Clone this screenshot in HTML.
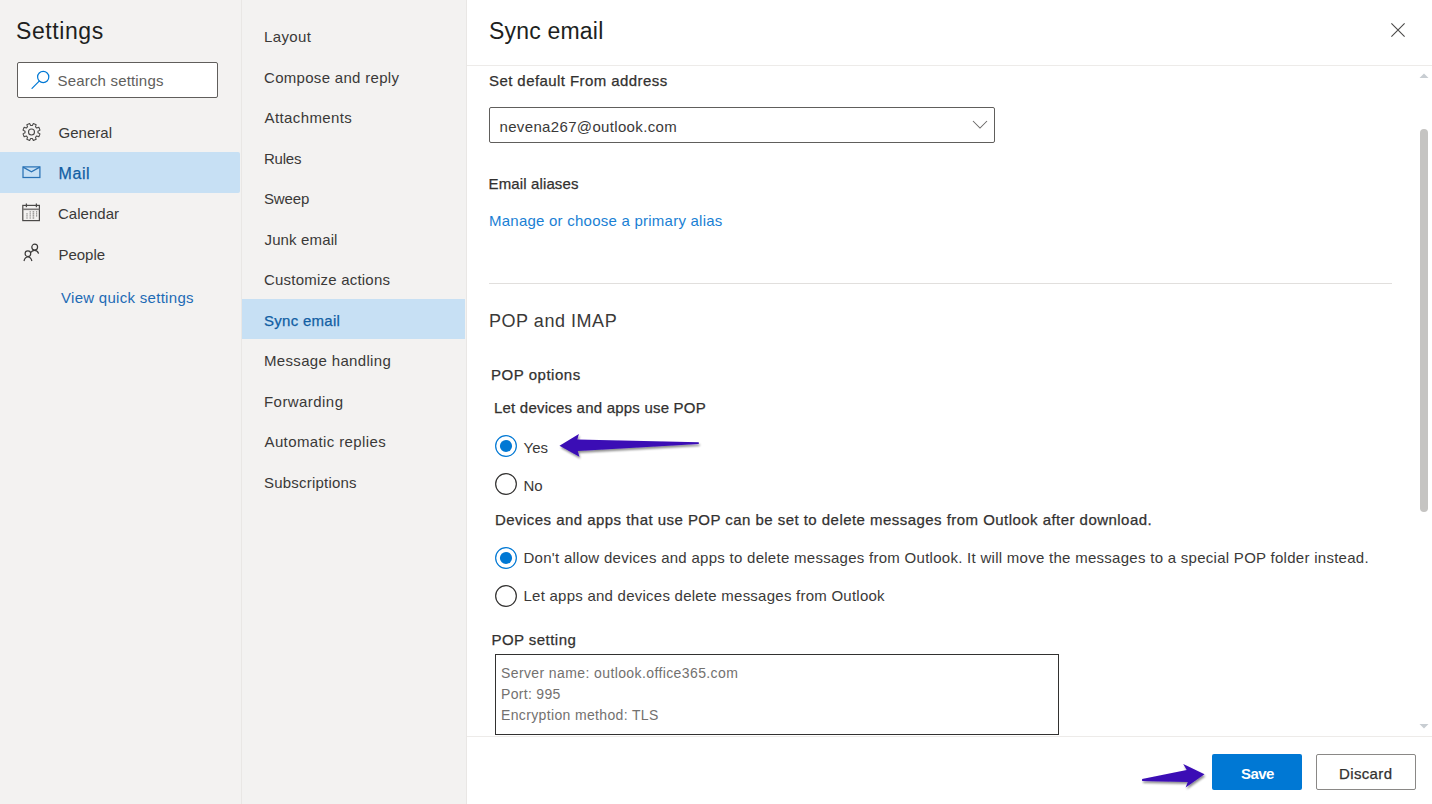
<!DOCTYPE html>
<html><head><meta charset="utf-8"><title>Settings - Sync email</title>
<style>
*{margin:0;padding:0;box-sizing:border-box}
html,body{width:1432px;height:804px;overflow:hidden;background:#fff;font-family:"Liberation Sans",sans-serif;color:#323130}
.t{position:absolute;white-space:nowrap;line-height:1}
</style></head><body>
<div style="position:absolute;left:0;top:0;width:241px;height:804px;background:#f3f2f1"></div>
<div style="position:absolute;left:241px;top:0;width:1px;height:804px;background:#e9e7e5"></div>
<div style="position:absolute;left:242px;top:0;width:224px;height:804px;background:#f3f2f1"></div>
<div style="position:absolute;left:466px;top:0;width:1px;height:804px;background:#e9e7e5"></div>
<div style="position:absolute;left:0;top:152px;width:240px;height:41px;background:#c7e0f4;border-radius:0 2px 2px 0"></div>
<div style="position:absolute;left:242px;top:299px;width:223px;height:40px;background:#c7e0f4"></div>
<div style="position:absolute;left:17px;top:62px;width:201px;height:36px;border:1px solid #605e5c;border-radius:2px;background:#fff"></div>
<svg style="position:absolute;left:26px;top:66px" width="28" height="28" viewBox="0 0 28 28"><circle cx="17.2" cy="11" r="5.6" fill="none" stroke="#0078d4" stroke-width="1.2"/><line x1="13.2" y1="15.2" x2="6" y2="22.4" stroke="#0078d4" stroke-width="1.2" stroke-linecap="round"/></svg>
<!-- gear -->
<svg style="position:absolute;left:21px;top:122px" width="21" height="21" viewBox="0 0 21 21" ><path d="M10.50,3.50 L11.35,3.56 L12.38,1.51 L15.17,2.66 L14.46,4.84 L15.10,5.40 L15.66,6.04 L17.84,5.33 L18.99,8.12 L16.94,9.15 L17.00,10.00 L16.94,10.85 L18.99,11.88 L17.84,14.67 L15.66,13.96 L15.10,14.60 L14.46,15.16 L15.17,17.34 L12.38,18.49 L11.35,16.44 L10.50,16.50 L9.65,16.44 L8.62,18.49 L5.83,17.34 L6.54,15.16 L5.90,14.60 L5.34,13.96 L3.16,14.67 L2.01,11.88 L4.06,10.85 L4.00,10.00 L4.06,9.15 L2.01,8.12 L3.16,5.33 L5.34,6.04 L5.90,5.40 L6.54,4.84 L5.83,2.66 L8.62,1.51 L9.65,3.56 Z" fill="none" stroke="#4a4948" stroke-width="1.1" stroke-linejoin="round"/><circle cx="10.5" cy="10.0" r="3.0" fill="none" stroke="#4a4948" stroke-width="1.1"/></svg>
<!-- mail -->
<svg style="position:absolute;left:21px;top:165px" width="21" height="14" viewBox="0 0 21 14"><rect x="2.0" y="1.9" width="16.9" height="10.6" fill="none" stroke="#2a72b5" stroke-width="1.25"/><polyline points="2.1,2.1 10.45,6.7 18.8,2.1" fill="none" stroke="#2a72b5" stroke-width="1.2"/></svg>
<!-- calendar -->
<svg style="position:absolute;left:21px;top:202px" width="21" height="21" viewBox="0 0 21 21"><rect x="1.8" y="3.4" width="16.6" height="15.2" fill="none" stroke="#4a4948" stroke-width="1.2"/><line x1="1.8" y1="7.3" x2="18.4" y2="7.3" stroke="#7a7978" stroke-width="1.6"/><line x1="5.4" y1="1.5" x2="5.4" y2="5.2" stroke="#4a4948" stroke-width="1.3"/><line x1="15.4" y1="1.5" x2="15.4" y2="5.2" stroke="#4a4948" stroke-width="1.3"/><g fill="#6a6968"><rect x="8.6" y="9.4" width="1.2" height="1"/><rect x="11.6" y="9.4" width="1.6" height="1"/><rect x="15" y="9.4" width="1.2" height="1"/><rect x="5.4" y="11.4" width="1.2" height="1"/><rect x="8.6" y="11.4" width="1.2" height="1"/><rect x="11.6" y="11.4" width="1.6" height="1"/><rect x="15" y="11.4" width="1.2" height="1"/><rect x="5.4" y="13.4" width="1.2" height="1"/><rect x="8.6" y="13.4" width="1.2" height="1"/><rect x="11.6" y="13.4" width="1.6" height="1"/><rect x="15" y="13.4" width="1.2" height="1"/><rect x="5.4" y="15.2" width="1.2" height="1.6" opacity=".6"/><rect x="8.6" y="15.2" width="1.2" height="1.6" opacity=".6"/><rect x="11.6" y="15.2" width="1.6" height="1.6" opacity=".6"/></g></svg>
<!-- people -->
<svg style="position:absolute;left:21px;top:242px" width="21" height="21" viewBox="0 0 21 21"><circle cx="6.9" cy="11.7" r="2.8" fill="none" stroke="#3b3a39" stroke-width="1.2"/><path d="M3,19 C3.6,16.2 5,15 6.9,15 C8.8,15 10.2,16.2 10.9,19" fill="none" stroke="#3b3a39" stroke-width="1.2"/><circle cx="13.7" cy="5.1" r="2.9" fill="none" stroke="#3b3a39" stroke-width="1.2"/><path d="M10,10.4 C10.8,9 12.2,8.4 13.7,8.4 C15.4,8.4 16.9,9.3 17.6,11.6" fill="none" stroke="#3b3a39" stroke-width="1.2"/></svg>

<!-- right panel -->
<div style="position:absolute;left:467px;top:65px;width:965px;height:1px;background:#edebe9"></div>
<svg style="position:absolute;left:1388px;top:20px" width="20" height="20" viewBox="0 0 20 20"><path d="M3.4,3.4 L16.6,16.6 M16.6,3.4 L3.4,16.6" stroke="#4a4948" stroke-width="1.1"/></svg>
<div style="position:absolute;left:489px;top:107px;width:506px;height:36px;border:1px solid #605e5c;border-radius:2px"></div>
<svg style="position:absolute;left:970px;top:118px" width="20" height="13" viewBox="0 0 20 13"><polyline points="3,3 10,10 17,3" fill="none" stroke="#6b6968" stroke-width="1.05"/></svg>
<div style="position:absolute;left:489px;top:283px;width:903px;height:1px;background:#e1dfdd"></div>

<!-- radios -->
<svg style="position:absolute;left:495px;top:435px" width="22" height="22" viewBox="0 0 22 22"><circle cx="11" cy="11" r="10.35" fill="none" stroke="#0078d4" stroke-width="1.2"/><circle cx="11" cy="11" r="6.1" fill="#0078d4"/></svg>
<svg style="position:absolute;left:495px;top:473px" width="22" height="22" viewBox="0 0 22 22"><circle cx="11" cy="11" r="10.35" fill="none" stroke="#323130" stroke-width="1.2"/></svg>
<svg style="position:absolute;left:495px;top:547px" width="22" height="22" viewBox="0 0 22 22"><circle cx="11" cy="11" r="10.35" fill="none" stroke="#0078d4" stroke-width="1.2"/><circle cx="11" cy="11" r="6.1" fill="#0078d4"/></svg>
<svg style="position:absolute;left:495px;top:585px" width="22" height="22" viewBox="0 0 22 22"><circle cx="11" cy="11" r="10.35" fill="none" stroke="#323130" stroke-width="1.2"/></svg>

<div style="position:absolute;left:495px;top:654px;width:564px;height:81px;border:1px solid #323130"></div>

<!-- scrollbar -->
<svg style="position:absolute;left:1418px;top:72px" width="12" height="8" viewBox="0 0 12 8"><polygon points="1.5,6 6,1.5 10.5,6" fill="#c8cdd2"/></svg>
<div style="position:absolute;left:1420px;top:129px;width:8px;height:383px;background:#c5c4c2;border-radius:4px"></div>
<svg style="position:absolute;left:1418px;top:722px" width="12" height="8" viewBox="0 0 12 8"><polygon points="1.5,2 10.5,2 6,6.5" fill="#c8cdd2"/></svg>

<!-- footer -->
<div style="position:absolute;left:467px;top:736px;width:965px;height:1px;background:#edebe9"></div>
<div style="position:absolute;left:1212px;top:754px;width:90px;height:36px;background:#0078d4;border-radius:2px"></div>
<div style="position:absolute;left:1316px;top:754px;width:100px;height:36px;border:1px solid #8a8886;border-radius:2px;background:#fff"></div>

<!-- annotation arrows -->
<svg style="position:absolute;left:550px;top:425px" width="160" height="45" viewBox="550 425 160 45">
 <defs><filter id="sh" x="-20%" y="-50%" width="140%" height="200%"><feGaussianBlur in="SourceAlpha" stdDeviation="1.2"/><feOffset dx="1" dy="2" result="b"/><feComponentTransfer><feFuncA type="linear" slope="0.45"/></feComponentTransfer><feMerge><feMergeNode/><feMergeNode in="SourceGraphic"/></feMerge></filter></defs>
 <polygon filter="url(#sh)" fill="#3a0cb5" points="559.5,445.7 578.9,433.9 577.3,439.6 698.8,442.2 698.8,443.9 577.8,451.1 579.4,456.8"/>
</svg>
<svg style="position:absolute;left:1130px;top:755px" width="85" height="45" viewBox="1130 755 85 45">
 <defs><filter id="sh2" x="-20%" y="-50%" width="140%" height="200%"><feGaussianBlur in="SourceAlpha" stdDeviation="1.2"/><feOffset dx="1" dy="2" result="b"/><feComponentTransfer><feFuncA type="linear" slope="0.45"/></feComponentTransfer><feMerge><feMergeNode/><feMergeNode in="SourceGraphic"/></feMerge></filter></defs>
 <polygon filter="url(#sh2)" fill="#3a0cb5" points="1142.1,779.1 1186.7,769.9 1183.2,764.1 1204.5,774.3 1185.6,787.6 1187.8,782 1142.1,781"/>
</svg>

<div class="t" style="left:16.00px;top:19.90px;font-size:23px;color:#201f1e;letter-spacing:0.591px">Settings</div>
<div class="t" style="left:57.50px;top:72.90px;font-size:15px;color:#605e5c;letter-spacing:0.180px">Search settings</div>
<div class="t" style="left:58.50px;top:124.80px;font-size:15px;color:#3a3938;letter-spacing:0.030px">General</div>
<div class="t" style="left:58.50px;top:165.80px;font-size:16px;color:#115ea3;letter-spacing:0.600px;-webkit-text-stroke:0.25px #115ea3">Mail</div>
<div class="t" style="left:58.00px;top:206.00px;font-size:15px;color:#3a3938;letter-spacing:0.026px">Calendar</div>
<div class="t" style="left:58.50px;top:246.80px;font-size:15px;color:#3a3938;letter-spacing:-0.036px">People</div>
<div class="t" style="left:61.00px;top:289.60px;font-size:15px;color:#1d6bb5;letter-spacing:0.290px">View quick settings</div>
<div class="t" style="left:264.00px;top:29.10px;font-size:15px;color:#3a3938;letter-spacing:0.360px">Layout</div>
<div class="t" style="left:264.00px;top:70.10px;font-size:15px;color:#3a3938;letter-spacing:0.304px">Compose and reply</div>
<div class="t" style="left:264.50px;top:110.10px;font-size:15px;color:#3a3938;letter-spacing:0.396px">Attachments</div>
<div class="t" style="left:264.00px;top:150.90px;font-size:15px;color:#3a3938;letter-spacing:-0.225px">Rules</div>
<div class="t" style="left:264.00px;top:191.00px;font-size:15px;color:#3a3938;letter-spacing:-0.135px">Sweep</div>
<div class="t" style="left:264.50px;top:231.80px;font-size:15px;color:#3a3938;letter-spacing:0.140px">Junk email</div>
<div class="t" style="left:264.00px;top:271.80px;font-size:15px;color:#3a3938;letter-spacing:0.214px">Customize actions</div>
<div class="t" style="left:264.00px;top:312.90px;font-size:15px;color:#115ea3;letter-spacing:0.280px;-webkit-text-stroke:0.25px #115ea3">Sync email</div>
<div class="t" style="left:264.00px;top:352.90px;font-size:15px;color:#3a3938;letter-spacing:0.336px">Message handling</div>
<div class="t" style="left:264.00px;top:394.00px;font-size:15px;color:#3a3938;letter-spacing:0.440px">Forwarding</div>
<div class="t" style="left:264.50px;top:433.80px;font-size:15px;color:#3a3938;letter-spacing:0.382px">Automatic replies</div>
<div class="t" style="left:264.00px;top:474.80px;font-size:15px;color:#3a3938;letter-spacing:0.210px">Subscriptions</div>
<div class="t" style="left:489.00px;top:19.90px;font-size:23px;color:#201f1e;letter-spacing:0.200px">Sync email</div>
<div class="t" style="left:489.00px;top:72.50px;font-size:15px;color:#323130;letter-spacing:0.423px;-webkit-text-stroke:0.25px #323130">Set default From address</div>
<div class="t" style="left:499.50px;top:119.00px;font-size:15px;color:#3a3938;letter-spacing:0.342px">nevena267@outlook.com</div>
<div class="t" style="left:488.50px;top:175.90px;font-size:15px;color:#323130;letter-spacing:0.135px;-webkit-text-stroke:0.25px #323130">Email aliases</div>
<div class="t" style="left:489.00px;top:212.90px;font-size:15px;color:#1a7fd4;letter-spacing:0.238px">Manage or choose a primary alias</div>
<div class="t" style="left:489.00px;top:312.00px;font-size:18px;color:#3a3938;letter-spacing:0.540px">POP and IMAP</div>
<div class="t" style="left:491.00px;top:367.00px;font-size:15px;color:#323130;letter-spacing:0.522px;-webkit-text-stroke:0.25px #323130">POP options</div>
<div class="t" style="left:494.00px;top:399.80px;font-size:15px;color:#323130;letter-spacing:0.213px;-webkit-text-stroke:0.25px #323130">Let devices and apps use POP</div>
<div class="t" style="left:523.50px;top:439.70px;font-size:15px;color:#3a3938">Yes</div>
<div class="t" style="left:523.50px;top:477.80px;font-size:15px;color:#3a3938">No</div>
<div class="t" style="left:495.00px;top:512.10px;font-size:15px;color:#323130;letter-spacing:0.459px;-webkit-text-stroke:0.25px #323130">Devices and apps that use POP can be set to delete messages from Outlook after download.</div>
<div class="t" style="left:523.50px;top:549.50px;font-size:15px;color:#3a3938;letter-spacing:0.277px">Don't allow devices and apps to delete messages from Outlook. It will move the messages to a special POP folder instead.</div>
<div class="t" style="left:523.50px;top:587.50px;font-size:15px;color:#3a3938;letter-spacing:0.244px">Let apps and devices delete messages from Outlook</div>
<div class="t" style="left:491.50px;top:631.60px;font-size:15px;color:#323130;letter-spacing:0.450px;-webkit-text-stroke:0.25px #323130">POP setting</div>
<div class="t" style="left:501.00px;top:665.80px;font-size:14px;color:#73716f;letter-spacing:0.393px">Server name: outlook.office365.com</div>
<div class="t" style="left:501.00px;top:686.90px;font-size:14px;color:#73716f;letter-spacing:0.315px">Port: 995</div>
<div class="t" style="left:501.00px;top:707.80px;font-size:14px;color:#73716f;letter-spacing:0.351px">Encryption method: TLS</div>
<div class="t" style="left:1241.00px;top:765.90px;font-size:15px;color:#ffffff;letter-spacing:-0.600px;font-weight:700">Save</div>
<div class="t" style="left:1339.00px;top:765.90px;font-size:15px;color:#323130;letter-spacing:0.360px;-webkit-text-stroke:0.25px #323130">Discard</div>
</body></html>
